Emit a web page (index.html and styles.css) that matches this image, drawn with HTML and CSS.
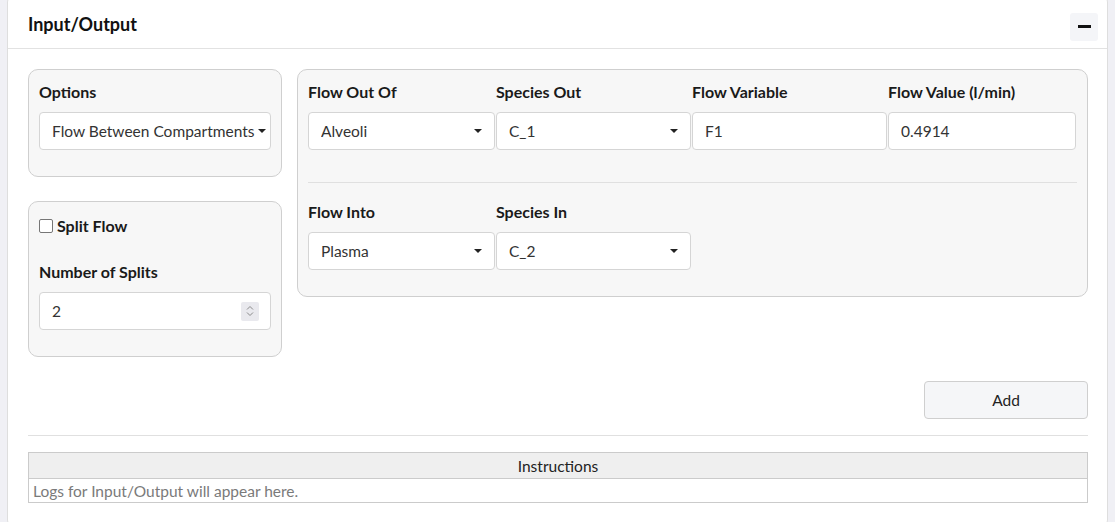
FILE: index.html
```html
<!DOCTYPE html>
<html lang="en">
<head>
<meta charset="utf-8">
<title>Input/Output</title>
<link rel="stylesheet" href="styles.css">
</head>
<body>
<div class="card">
  <div class="card-header">
    <h3 class="card-title">Input/Output</h3>
    <button class="collapse-btn" type="button" aria-label="Collapse"><span class="minus"></span></button>
  </div>
  <div class="card-body">
    <div class="main-row">
      <div class="left-col">
        <div class="well">
          <div class="form-group">
            <label class="label">Options</label>
            <div class="field select"><span class="field-text">Flow Between Compartments</span><span class="caret"></span></div>
          </div>
        </div>
        <div class="well">
          <div class="checkbox-row"><span class="checkbox"></span><span class="label">Split Flow</span></div>
          <div class="form-group">
            <label class="label">Number of Splits</label>
            <div class="field number"><span class="field-text">2</span>
              <span class="spinner">
                <svg width="10" height="14" viewBox="0 0 10 14"><path d="M2 5.5 L5 2.5 L8 5.5" fill="none" stroke="#8a8a8a" stroke-width="1"/><path d="M2 8.5 L5 11.5 L8 8.5" fill="none" stroke="#8a8a8a" stroke-width="1"/></svg>
              </span>
            </div>
          </div>
        </div>
      </div>
      <div class="well flow-well">
        <div class="flow-grid">
          <div class="form-group">
            <label class="label">Flow Out Of</label>
            <div class="field select"><span class="field-text">Alveoli</span><span class="caret"></span></div>
          </div>
          <div class="form-group">
            <label class="label">Species Out</label>
            <div class="field select"><span class="field-text">C_1</span><span class="caret"></span></div>
          </div>
          <div class="form-group">
            <label class="label">Flow Variable</label>
            <div class="field"><span class="field-text">F1</span></div>
          </div>
          <div class="form-group">
            <label class="label">Flow Value (l/min)</label>
            <div class="field"><span class="field-text">0.4914</span></div>
          </div>
        </div>
        <hr class="rule">
        <div class="flow-grid">
          <div class="form-group">
            <label class="label">Flow Into</label>
            <div class="field select"><span class="field-text">Plasma</span><span class="caret"></span></div>
          </div>
          <div class="form-group">
            <label class="label">Species In</label>
            <div class="field select"><span class="field-text">C_2</span><span class="caret"></span></div>
          </div>
        </div>
      </div>
    </div>
    <div class="actions">
      <button class="add-btn" type="button">Add</button>
    </div>
    <hr class="rule outer-rule">
    <table class="log-table">
      <thead><tr><th>Instructions</th></tr></thead>
      <tbody><tr><td>Logs for Input/Output will appear here.</td></tr></tbody>
    </table>
  </div>
</div>
</body>
</html>
```

FILE: styles.css
```css
* { box-sizing: border-box; }

html, body {
  margin: 0;
  padding: 0;
}

body {
  background: #f0f0f5;
  font-family: "Lato", "Liberation Sans", sans-serif;
  font-size: 15px;
  color: #212529;
  padding: 0 7px 0 7px;
  height: 522px;
  overflow: hidden;
}

.card {
  margin-top: -4px;
  width: 1101px;
  background: #fff;
  border: 1px solid #dedede;
  border-radius: 6px;
  height: 530px;
}

.card-header {
  height: 52px;
  padding: 3px 9px 0 20px;
  display: flex;
  align-items: center;
  justify-content: space-between;
  border-bottom: 1px solid #e2e2e2;
}

.card-title {
  margin: 0;
  font-size: 18px;
  font-weight: 700;
  color: #111;
}

.collapse-btn {
  width: 28px;
  height: 28px;
  border: none;
  border-radius: 3px;
  background: #f4f5f8;
  padding: 0;
  display: flex;
  align-items: center;
  justify-content: center;
  margin-top: 5px;
}

.minus {
  display: block;
  width: 13px;
  height: 3px;
  background: #111;
}

.card-body {
  padding: 20px 19px 0 20px;
}

.main-row {
  display: flex;
  gap: 15px;
  align-items: flex-start;
}

.left-col {
  width: 254px;
  display: flex;
  flex-direction: column;
  gap: 24px;
}

.well {
  background: #f7f7f7;
  border: 1px solid #cfcfcf;
  border-radius: 10px;
  padding: 11px 10px 10px 10px;
}

.flow-well {
  width: 791px;
}

.form-group {
  margin-bottom: 16px;
}

.label {
  display: block;
  font-weight: 700;
  font-size: 16px;
  line-height: 22px;
  margin-bottom: 9px;
  color: #1a1a1a;
  white-space: nowrap;
}

.field {
  position: relative;
  height: 38px;
  background: #fff;
  border: 1px solid #d5d5d5;
  border-radius: 4px;
  padding: 0 12px;
  display: flex;
  align-items: center;
  font-size: 15.5px;
  color: #333;
  overflow: hidden;
}

.field-text {
  white-space: nowrap;
  overflow: hidden;
  flex: 1;
}

.select {
  padding-right: 12px;
}

.caret {
  flex: none;
  width: 0;
  height: 0;
  border-left: 4px solid transparent;
  border-right: 4px solid transparent;
  border-top: 4px solid #222;
  margin-left: 6px;
}

.left-col .select {
  padding-right: 4px;
}

.left-col .select .caret {
  margin-left: 0;
}

.number {
  padding-right: 11px;
}

.spinner {
  width: 18px;
  height: 19px;
  background: #e9e9ee;
  border-radius: 2px;
  display: flex;
  align-items: center;
  justify-content: center;
}

.checkbox-row {
  display: flex;
  align-items: center;
  height: 25px;
  margin-bottom: 23px;
}

.checkbox-row .label {
  margin: 0;
}

.checkbox {
  width: 14px;
  height: 14px;
  border: 1.5px solid #767676;
  border-radius: 2px;
  background: #fff;
  margin-right: 4px;
}

.flow-grid {
  display: grid;
  grid-template-columns: 188px 196px 196px 189px;
}

.flow-grid .field {
  margin-right: 1px;
}

.rule {
  border: none;
  border-top: 1px solid #e0e0e0;
  margin: 16px 0 18px 0;
}

.actions {
  display: flex;
  justify-content: flex-end;
  margin-top: 24px;
}

.add-btn {
  width: 164px;
  height: 38px;
  background: #f5f6f8;
  border: 1px solid #cfcfcf;
  border-radius: 4px;
  font-family: inherit;
  font-size: 15.5px;
  color: #222;
}

.outer-rule {
  margin: 16px 0 16px 0;
}

.log-table {
  width: 100%;
  border-collapse: collapse;
  font-size: 15.5px;
}

.log-table th {
  background: #efefef;
  border: 1px solid #cbcbcb;
  font-weight: 400;
  height: 26px;
  padding: 0;
  color: #222;
}

.log-table td {
  border: 1px solid #cbcbcb;
  height: 24px;
  padding: 0 4px;
  color: #7a7a7a;
}
```
